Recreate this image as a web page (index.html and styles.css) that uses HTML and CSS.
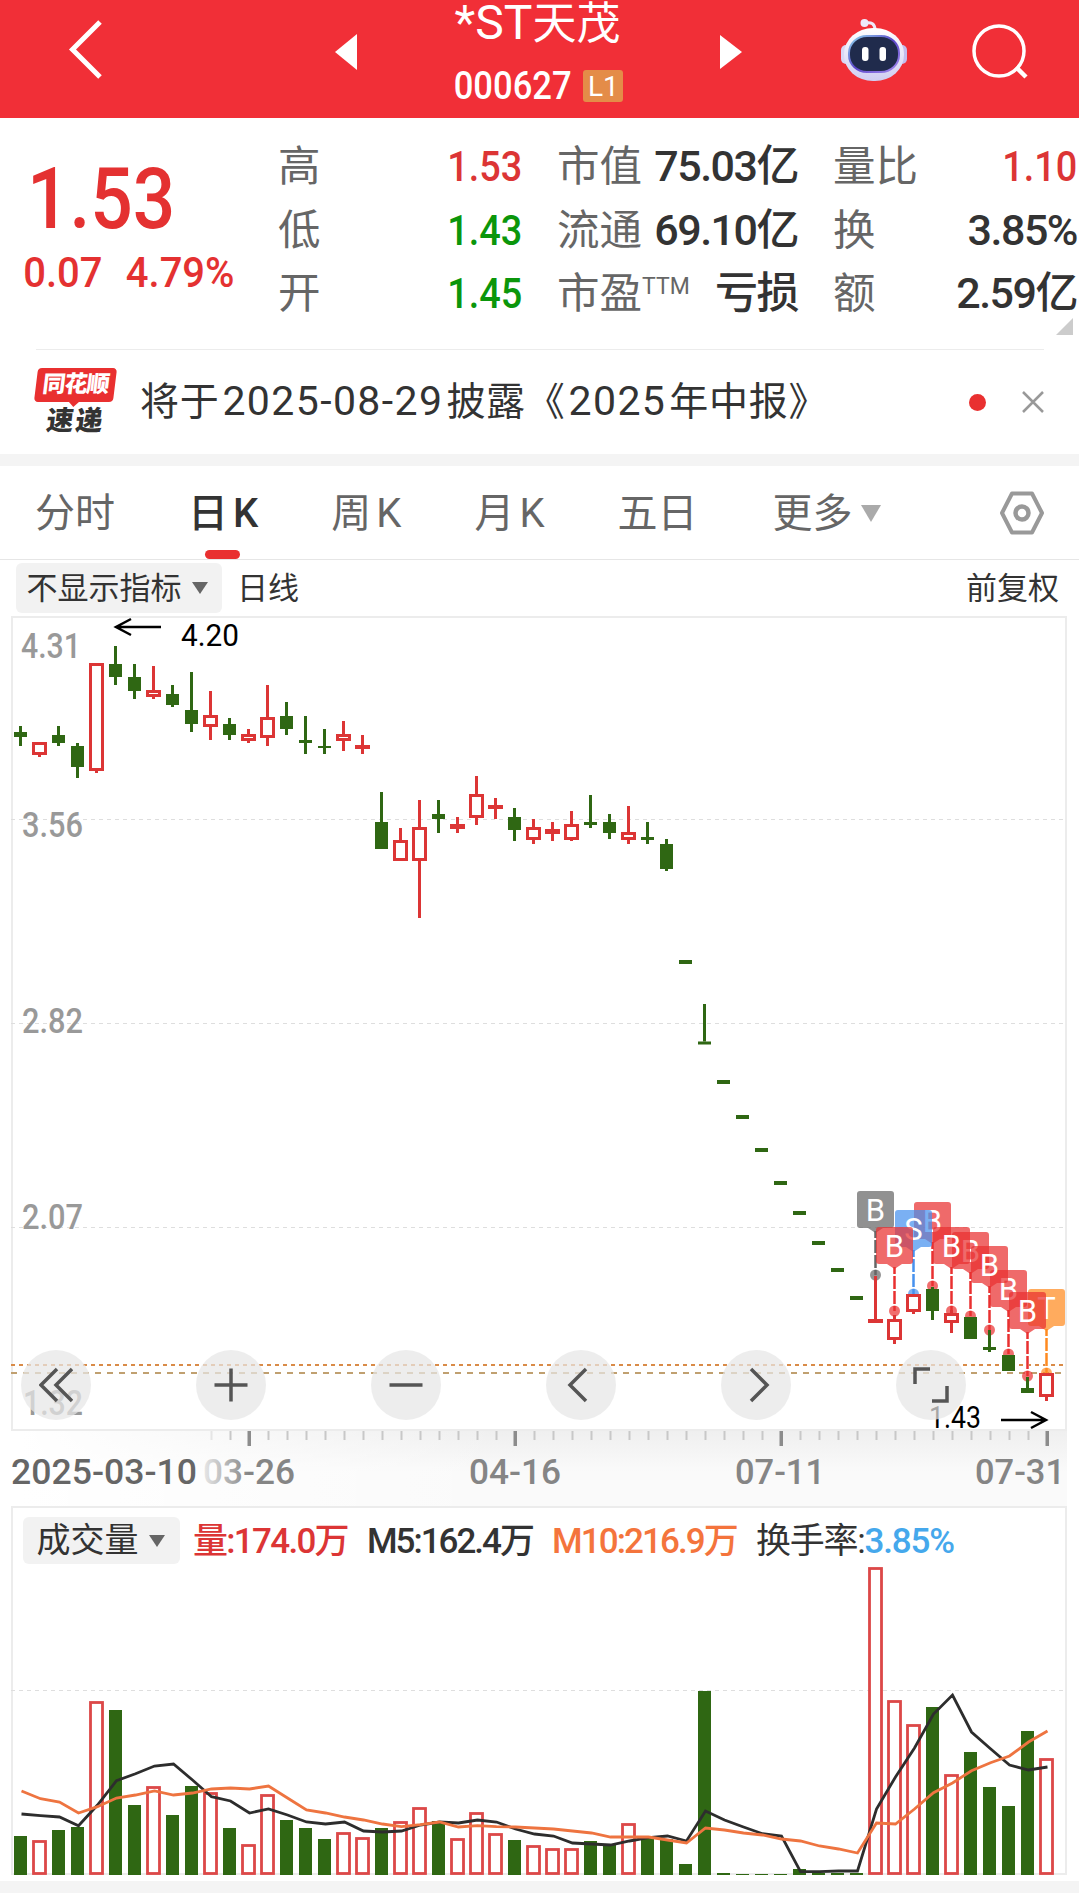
FILE: index.html
```html
<!DOCTYPE html>
<html lang="zh-CN">
<head>
  <meta charset="utf-8">
  <title>*ST天茂 000627</title>
  <meta name="viewport" content="width=device-width, initial-scale=1.0">
  <link rel="stylesheet" href="styles.css">
</head>
<body>
  <header class="topbar">
    <svg class="back" width="36" height="62" viewBox="0 0 36 62"><path d="M32 3 L4.500 30.500 L32 58" fill="none" stroke="#fff" stroke-width="5"/></svg>
    <svg class="prev" width="22" height="36" viewBox="0 0 22 36"><path d="M22 0 V36 L0 18 Z" fill="#fff"/></svg>
    <div class="title">
      <div class="name"><span class="latin">*ST</span>天茂</div>
      <div class="code"><span class="num">000627</span><span class="level">L1</span></div>
    </div>
    <svg class="next" width="22" height="34" viewBox="0 0 22 34"><path d="M0 0 V34 L22 17 Z" fill="#fff"/></svg>
    <svg class="robot" width="68" height="64" viewBox="0 0 68 64">
      <defs>
        <linearGradient id="head" x1="0" y1="0" x2="0" y2="1"><stop offset="0" stop-color="#fff"/><stop offset="1" stop-color="#cfcdf2"/></linearGradient>
        <linearGradient id="rim" x1="0" y1="0" x2="1" y2="1"><stop offset="0" stop-color="#8fd8ee"/><stop offset=".5" stop-color="#5b45c8"/><stop offset="1" stop-color="#a58cf0"/></linearGradient>
      </defs>
      <path d="M25 5 Q35 3 35 12" fill="none" stroke="#eee9fa" stroke-width="3"/>
      <circle cx="24.500" cy="5" r="4" fill="#eee9fa"/>
      <rect x="1" y="27" width="12" height="19" rx="5" fill="#d9d7f5"/>
      <rect x="55" y="27" width="12" height="19" rx="5" fill="#c3bdee"/>
      <rect x="4" y="10" width="60" height="53" rx="29" ry="26" fill="url(#head)"/>
      <rect x="9" y="18" width="50" height="36" rx="18" ry="17" fill="#202b4c" stroke="url(#rim)" stroke-width="2"/>
      <rect x="22" y="29" width="6.500" height="14" rx="3" fill="#fff"/>
      <rect x="39.500" y="29" width="6.500" height="14" rx="3" fill="#fff"/>
    </svg>
    <svg class="search" width="58" height="58" viewBox="0 0 58 58"><circle cx="27" cy="27" r="25" fill="none" stroke="#fff" stroke-width="3.500"/><path d="M44 43 L54 53" stroke="#fff" stroke-width="4.500"/></svg>
  </header>

  <section class="quote">
    <div class="price">
      <div class="last num">1.53</div>
      <div class="change num"><span>0.07</span><span>4.79%</span></div>
    </div>
    <dl class="stats">
      <div><dt>高</dt><dd class="num up">1.53</dd></div>
      <div><dt>市值</dt><dd class="num">75.03亿</dd></div>
      <div><dt>量比</dt><dd class="num up">1.10</dd></div>
      <div><dt>低</dt><dd class="num down">1.43</dd></div>
      <div><dt>流通</dt><dd class="num">69.10亿</dd></div>
      <div><dt>换</dt><dd class="num">3.85%</dd></div>
      <div><dt>开</dt><dd class="num down">1.45</dd></div>
      <div><dt>市盈<sup>TTM</sup></dt><dd class="num">亏损</dd></div>
      <div><dt>额</dt><dd class="num">2.59亿</dd></div>
    </dl>
    <i class="corner"></i>
  </section>

  <section class="news">
    <div class="brand">
      <span class="brand-top">同花顺</span>
      <span class="brand-bottom">速递</span>
    </div>
    <p>将于<span class="date">2025-08-29</span>披露《<span class="date">2025</span>年中报》</p>
    <i class="dot"></i>
    <svg width="22" height="22" viewBox="0 0 22 22"><path d="M1 1 L21 21 M21 1 L1 21" stroke="#999" stroke-width="2.500"/></svg>
  </section>

  <nav class="tabs">
    <a>分时</a>
    <a class="active">日<b>K</b></a>
    <a>周<b>K</b></a>
    <a>月<b>K</b></a>
    <a>五日</a>
    <a class="more">更多<i class="caret"></i></a>
    <svg width="46" height="44" viewBox="0 0 46 44"><path d="M13 2.500 H33 L43 22 L33 41.500 H13 L3 22 Z" fill="none" stroke="#999" stroke-width="4" stroke-linejoin="round"/><circle cx="23" cy="22" r="6.500" fill="none" stroke="#999" stroke-width="4.500"/></svg>
  </nav>

  <div class="indicator">
    <button class="chip">不显示指标<i class="caret"></i></button>
    <span>日线</span>
    <span class="adjust">前复权</span>
  </div>

  <main class="kline">
    <svg id="kline" width="1079" height="815" viewBox="0 616 1079 815"></svg>
    <div class="tools">
      <button><svg width="34" height="36" viewBox="0 0 34 36"><path d="M18 2 L2 18 L18 34 M33 2 L17 18 L33 34"/></svg></button>
      <button><svg width="34" height="34" viewBox="0 0 34 34"><path d="M0.500 17 H33.500 M17 0.500 V33.500"/></svg></button>
      <button><svg width="34" height="34" viewBox="0 0 34 34"><path d="M0.500 17 H33.500"/></svg></button>
      <button><svg width="34" height="36" viewBox="0 0 34 36"><path d="M22 2 L6 18 L22 34"/></svg></button>
      <button><svg width="34" height="36" viewBox="0 0 34 36"><path d="M12 2 L28 18 L12 34"/></svg></button>
      <button><svg width="38" height="38" viewBox="0 0 38 38"><path d="M3 18 V3 H18 M35 20 V35 H20"/></svg></button>
    </div>
  </main>

  <div class="axis">
    <svg id="axis" width="1079" height="75" viewBox="0 1431 1079 75"></svg>
  </div>

  <section class="volume">
    <div class="legend">
      <button class="chip">成交量<i class="caret"></i></button>
      <span class="v1 num">量:174.0万</span>
      <span class="v2 num">M5:162.4万</span>
      <span class="v3 num">M10:216.9万</span>
      <span class="v4 num">换手率:<em>3.85%</em></span>
    </div>
    <svg id="volume" width="1079" height="369" viewBox="0 1506 1079 369"></svg>
  </section>
  <div class="gap"></div>

  <script src="chart.js"></script>
</body>
</html>
```
FILE: styles.css
```css
body {
  margin: 0;
  width: 1079px;
  height: 1898px;
  overflow: hidden;
  background: #fff;
  color: #333;
  font-family: Roboto, "Noto Sans CJK SC", sans-serif;
}
svg {
  display: block;
  flex: none;
}
i, em {
  font-style: normal;
}
button {
  border: none;
  padding: 0;
  font: inherit;
  color: inherit;
}
.num {
  font-weight: 500;
}
.up {
  color: #dc3535;
}
.down {
  color: #0b960b;
}

/* header */
.topbar {
  display: flex;
  height: 118px;
  background: #f12f37;
  color: #fff;
}
.back {
  margin: 19px 0 0 68px;
}
.prev {
  margin: 34px 0 0 231px;
}
.title {
  width: 361px;
  padding-right: 2px;
  text-align: center;
}
.name {
  height: 63px;
  line-height: 46px;
  font-size: 44px;
}
.latin {
  font-size: 48px;
}
.code {
  display: flex;
  justify-content: center;
  align-items: center;
  height: 46px;
  font-size: 38px;
}
.code .num {
  transform: scaleX(.91);
  transform-origin: right;
}
.level {
  width: 40px;
  height: 32px;
  margin: 0 10px 0 12px;
  border-radius: 3px;
  background: #e48c48;
  font-size: 28px;
  line-height: 33px;
}
.next {
  margin-top: 35px;
}
.robot {
  margin: 18px 0 0 98px;
}
.search {
  margin: 24px 0 0 64px;
}

/* quote */
.quote {
  position: relative;
  display: flex;
  height: 231px;
}
.price {
  width: 278px;
  color: #e43131;
}
.last {
  padding: 31px 0 0 31px;
  height: 92px;
  line-height: 100px;
  font-size: 86px;
  transform: scaleX(.87);
  transform-origin: left;
}
.change {
  display: flex;
  gap: 25px;
  padding-left: 25px;
  font-size: 43px;
  line-height: 63px;
  transform: scaleX(.93);
  transform-origin: left;
}
.stats {
  display: grid;
  grid-template-columns: 244px 241px 244px;
  grid-auto-rows: 63.500px;
  column-gap: 35px;
  margin: 17px 0 0;
}
.stats div {
  display: flex;
  justify-content: space-between;
  align-items: center;
}
.stats dt {
  color: #666;
  font-size: 42.500px;
  line-height: 63px;
  white-space: nowrap;
}
.stats sup {
  font-size: 23px;
  line-height: 0;
  vertical-align: 14px;
}
.stats dd {
  margin: 0;
  font-size: 43px;
  line-height: 63px;
  letter-spacing: -1.500px;
}
.stats .up, .stats .down {
  letter-spacing: 0;
  transform: scaleX(.88);
  transform-origin: right;
}
.corner {
  position: absolute;
  right: 6px;
  top: 200px;
  border-left: 17px solid transparent;
  border-bottom: 17px solid #ccc;
}

/* news */
.news {
  display: flex;
  align-items: center;
  height: 104px;
  margin: 0 35px 0 36px;
  border-top: 1px solid #ececec;
}
.brand {
  width: 79px;
  margin-right: 25px;
  text-align: center;
}
.brand span {
  display: block;
  font-weight: 900;
  transform: skewX(-7deg);
}
.brand-top {
  position: relative;
  height: 34px;
  border-radius: 4px;
  background: #e93030;
  color: #fff;
  font-size: 23px;
  line-height: 34px;
  letter-spacing: -1px;
}
.brand-top::after {
  content: "";
  position: absolute;
  left: 34px;
  top: 33px;
  border: 6px solid transparent;
  border-top-color: #e93030;
  border-bottom: 0;
}
.brand-bottom {
  margin-top: 3px;
  font-size: 27px;
  line-height: 32px;
  letter-spacing: 2px;
}
.news p {
  margin: -8px 0 0;
  flex: 1;
  font-size: 39px;
  letter-spacing: .700px;
  white-space: nowrap;
}
.date {
  margin: 0 3px;
  font-size: 41px;
  letter-spacing: 1.400px;
}
.dot {
  width: 17px;
  height: 17px;
  border-radius: 50%;
  background: #e93030;
  margin-right: 36px;
}

/* tabs */
.tabs {
  display: flex;
  height: 93px;
  padding: 0 34px 0 35px;
  border-top: 12px solid #f4f4f4;
  border-bottom: 1px solid #e6e6e6;
  line-height: 95px;
  font-size: 40px;
  color: #666;
}
.tabs a {
  position: relative;
  margin-right: 73px;
  white-space: nowrap;
}
.tabs b {
  font-weight: inherit;
  margin-left: 5px;
}
.tabs .active {
  color: #333;
  font-weight: 500;
}
.active::after {
  content: "";
  position: absolute;
  left: 17px;
  bottom: 0;
  width: 35px;
  height: 9px;
  border-radius: 5px;
  background: #e93030;
}
.tabs .more {
  margin: 0 0 0 2px;
}
.tabs svg {
  margin: 25px 0 0 auto;
}
.caret {
  display: inline-block;
  margin-left: 8px;
  border: 10px solid transparent;
  border-top: 17px solid #aaa;
  border-bottom: 0;
  vertical-align: 5px;
}
.chip {
  border-radius: 6px;
  background: #f2f2f2;
  white-space: nowrap;
}
.chip .caret {
  margin-left: 10px;
  border-width: 12px 8px 0;
  border-top-color: #666;
}
.indicator {
  display: flex;
  height: 50px;
  padding: 3px 20px 3px 16px;
  font-size: 31px;
  line-height: 51px;
}
.indicator .chip {
  width: 206px;
  height: 50px;
  padding: 0 4px 2px 0;
  margin-right: 15px;
}
.adjust {
  margin-left: auto;
}

/* charts */
.kline {
  position: relative;
}
.tools {
  position: absolute;
  left: 21px;
  top: 734px;
  display: flex;
  gap: 105px;
}
.tools button {
  display: flex;
  justify-content: center;
  align-items: center;
  width: 70px;
  height: 70px;
  border-radius: 50%;
  background: rgba(230, 230, 230, .72);
}
.tools path {
  fill: none;
  stroke: #555;
  stroke-width: 3.500;
}
.axis {
  width: 1067px;
  overflow: hidden;
  background: linear-gradient(90deg, #fff 20px, rgba(255, 255, 255, 0) 500px), linear-gradient(#efefef, #fafafa 55%);
}
.volume {
  position: relative;
}
.legend {
  position: absolute;
  left: 23px;
  top: 11px;
  display: flex;
  font-size: 35px;
  line-height: 49px;
  white-space: nowrap;
}
.legend .chip {
  width: 157px;
  height: 47px;
  padding: 0 2px 0 0;
  margin-right: 13px;
  font-size: 34px;
  line-height: 47px;
}
.legend span {
  margin-right: 19px;
}
.v1 {
  color: #dc3535;
  letter-spacing: -1.700px;
}
.v2 {
  letter-spacing: -2px;
}
.v3 {
  color: #f4743c;
  letter-spacing: -1.900px;
}
.v4 {
  letter-spacing: -1.200px;
  font-weight: 400;
}
.v4 em {
  color: #45a8ec;
  font-weight: 500;
}
.gap {
  height: 12px;
  margin-top: 6px;
  background: #f4f4f4;
}

.frame {
  fill: none;
  stroke: #ececec;
  stroke-width: 2;
}
.grid {
  stroke: #dedede;
  stroke-dasharray: 4 4;
}
.scale {
  fill: #999;
  font: 500 35px Roboto, sans-serif;
}
.day {
  fill: #858585;
  font: 500 35px Roboto, sans-serif;
}
.mark {
  fill: #000;
  font: 31px Roboto, sans-serif;
}
.flag {
  fill: #fff;
  font: 31px Roboto, sans-serif;
  text-anchor: middle;
}
```
FILE: chart.js
```js
// [direction, high, body top, body bottom, low, volume top, M5, M10]
var days = [
  ["g", 726, 732, 737, 746, 1836, 1814, 1791],
  ["r", 742, 742, 755, 757, 1840, 1815.7, 1798.7],
  ["g", 726, 735, 743, 746, 1830, 1817, 1802],
  ["g", 743, 746, 767, 778, 1827, 1825.7, 1813],
  ["r", 663, 663, 771, 773, 1701, 1805, 1806.7],
  ["g", 646, 664, 677, 685, 1710, 1780.7, 1798],
  ["g", 664, 677, 691, 699, 1805, 1773.7, 1795],
  ["r", 666, 690, 697, 699, 1786, 1766, 1791],
  ["g", 685, 694, 705, 707, 1815, 1764, 1795],
  ["g", 672, 710, 724, 732, 1786, 1780, 1793],
  ["r", 691, 715, 727, 740, 1792, 1796.7, 1789],
  ["g", 718, 724, 735, 740, 1828, 1801, 1788],
  ["r", 729, 734, 741, 743, 1844, 1813, 1789],
  ["r", 685, 717, 738, 746, 1794, 1809, 1786],
  ["g", 702, 716, 729, 735, 1820, 1815, 1798],
  ["g", 716, 740, 743, 754, 1828, 1822, 1810],
  ["g", 729, 746, 748, 754, 1839, 1824, 1813],
  ["r", 721, 734, 741, 751, 1832, 1822, 1817],
  ["r", 735, 745, 749, 754, 1837, 1831, 1820],
  ["g", 792, 822, 849, 849, 1828, 1832, 1824],
  ["r", 828, 840, 861, 861, 1821, 1831, 1826.7],
  ["r", 800, 827, 861, 918, 1807, 1825, 1824.7],
  ["g", 800, 814, 819, 833, 1821, 1822, 1822],
  ["r", 817, 824, 829, 833, 1838, 1823, 1827],
  ["r", 776, 794, 818, 825, 1812, 1820, 1825.7],
  ["r", 798, 805, 809, 819, 1833, 1822, 1826.7],
  ["g", 808, 817, 830, 841, 1840, 1829, 1827],
  ["r", 819, 827, 840, 844, 1845, 1834, 1828],
  ["r", 822, 829, 834, 841, 1848, 1836, 1829],
  ["r", 811, 824, 840, 841, 1848, 1843, 1831],
  ["g", 795, 822, 825, 828, 1841, 1844, 1833],
  ["g", 814, 822, 833, 839, 1844, 1845, 1837],
  ["r", 806, 832, 840, 844, 1823, 1841, 1837],
  ["g", 822, 837, 840, 844, 1838, 1837.7, 1837],
  ["g", 839, 844, 869, 871, 1839, 1836, 1840],
  ["g", 960, 960, 964, 964, 1864, 1841, 1843],
  ["g", 1004, 1041.5, 1044.5, 1044, 1691, 1811, 1828],
  ["g", 1080, 1080, 1084, 1084, 1873, 1820, 1830],
  ["g", 1115, 1115, 1119, 1119, 1874, 1827, 1833],
  ["g", 1148, 1148, 1152, 1152, 1874, 1833.7, 1835],
  ["g", 1181, 1181, 1185, 1185, 1874, 1836, 1839],
  ["g", 1211, 1211, 1215, 1215, 1869, 1871.7, 1841],
  ["g", 1241, 1241, 1245, 1245, 1873, 1871.7, 1846],
  ["g", 1268, 1268, 1272, 1272, 1873, 1871, 1849],
  ["g", 1296, 1296, 1300, 1300, 1873, 1871, 1853],
  ["r", 1276, 1319, 1323, 1323, 1567, 1809, 1823],
  ["r", 1315, 1319, 1340, 1344, 1700, 1777, 1824],
  ["r", 1294, 1294, 1312, 1314, 1724, 1748, 1809],
  ["g", 1287, 1289, 1311, 1320, 1707, 1714, 1792.7],
  ["r", 1310, 1313, 1323, 1333, 1774, 1695, 1783],
  ["g", 1317, 1317, 1339, 1339, 1752, 1732, 1770.7],
  ["g", 1330, 1347, 1350, 1352, 1787, 1748.7, 1762.7],
  ["g", 1355, 1355, 1371, 1371, 1806, 1765, 1756],
  ["g", 1377, 1388, 1393, 1393, 1731, 1770, 1742],
  ["r", 1373, 1373, 1397, 1401, 1758, 1767, 1731]
];

// [day, letter, colour, top], back to front
var flags = [
  [54, "T", "#ff8a20", 1289], [52, "B", "#e93030", 1270], [50, "B", "#e93030", 1232],
  [48, "B", "#e93030", 1202], [47, "S", "#4791ee", 1210], [45, "B", "#666", 1191],
  [53, "B", "#e93030", 1292], [51, "B", "#e93030", 1246], [49, "B", "#e93030", 1227],
  [46, "B", "#e93030", 1227]
];

var RED = "#dc3535";
var GREEN = "#2f6713";

function x(i) {
  return 20.5 + 19 * i;
}
function rect(left, top, width, height, fill, extra) {
  return '<rect x="' + left + '" y="' + top + '" width="' + width + '" height="' + height + '" fill="' + fill + '" ' + (extra || "") + '/>';
}
function line(x1, y1, x2, y2, extra) {
  return '<line x1="' + x1 + '" y1="' + y1 + '" x2="' + x2 + '" y2="' + y2 + '" ' + extra + '/>';
}
function text(left, baseline, width, cls, value, extra) {
  return '<text x="' + left + '" y="' + baseline + '" textLength="' + width + '" lengthAdjust="spacingAndGlyphs" class="' + cls + '" ' + (extra || "") + '>' + value + '</text>';
}

function drawKline() {
  var out = rect(12, 617, 1054, 813, "none", 'class="frame"');
  [819.5, 1023.5, 1227.5].forEach(function(y) {
    out += line(11, y, 1065, y, 'class="grid"');
  });
  out += text(21, 658, 60, "scale", "4.31");
  out += text(22, 837, 61, "scale", "3.56");
  out += text(22, 1033, 61, "scale", "2.82");
  out += text(22, 1229, 61, "scale", "2.07");
  out += text(23, 1415, 60, "scale", "1.32");
  out += line(11, 1365, 1065, 1365, 'stroke="#d98b48" stroke-width="2" stroke-dasharray="4 4"');
  out += line(11, 1373, 1065, 1373, 'stroke="#c0a070" stroke-width="2" stroke-dasharray="6 6"');

  flags.forEach(function(f) {
    out += line(x(f[0]), f[3] + 40, x(f[0]), f[3] + 84, 'stroke="#fff" stroke-width="3"');
    out += line(x(f[0]), f[3] + 40, x(f[0]), f[3] + 84, 'stroke="' + f[2] + '" stroke-width="2.5" stroke-dasharray="13 2" stroke-dashoffset="6"');
    out += '<circle cx="' + x(f[0]) + '" cy="' + (f[3] + 84) + '" r="5.5" fill="' + f[2] + '" opacity=".7"/>';
  });

  days.forEach(function(d, i) {
    var color = d[0] == "r" ? RED : GREEN;
    if (d[2] > d[1]) out += rect(x(i) - 1.5, d[1], 3, d[2] - d[1], color);
    if (d[4] > d[3]) out += rect(x(i) - 1.5, d[3], 3, d[4] - d[3], color);
    if (d[0] == "g") {
      out += rect(x(i) - 6.5, d[2], 13, d[3] - d[2], GREEN);
    } else if (d[3] - d[2] < 6) {
      out += rect(x(i) - 7.5, d[2], 15, d[3] - d[2], RED);
    } else {
      out += rect(x(i) - 6, d[2] + 1.5, 12, d[3] - d[2] - 3, "#fff", 'stroke="' + RED + '" stroke-width="3"');
    }
  });

  flags.forEach(function(f) {
    var left = x(f[0]) - 18.5, t = f[3];
    out += '<g opacity=".72"><path fill="' + f[2] + '" d="M' + (left + 3) + ' ' + t + 'h31q3 0 3 3v31q0 3 -3 3h-8l-7.5 5l-7.5 -5h-8q-3 0 -3 -3v-31q0 -3 3 -3z"/></g>';
    out += '<text class="flag" x="' + x(f[0]) + '" y="' + (t + 30) + '">' + f[1] + '</text>';
  });

  out += '<path d="M161 627 H116 M131 619 L116 627 L131 635 M1001 1420 H1046 M1031 1412 L1046 1420 L1031 1428" fill="none" stroke="#000" stroke-width="2.5"/>';
  out += text(181, 646, 58, "mark", "4.20");
  out += text(929, 1428, 52, "mark", "1.43");
  document.getElementById("kline").innerHTML = out;
}

function drawAxis() {
  var out = "";
  for (var i = 10; i < 55; i++) {
    if (i % 14 == 12) {
      out += rect(x(i) - 1, 1431, 3.5, 15, "#8c8c8c");
    } else {
      out += rect(x(i), 1431, 2, 9, "#c8c8c8", i == 10 ? 'opacity=".4"' : "");
    }
  }
  out += '<defs><linearGradient id="fade"><stop offset="0" stop-color="#e8e8e8"/><stop offset=".5" stop-color="#858585"/></linearGradient></defs>';
  out += text(11, 1484, 186, "day", "2025-03-10", 'style="fill:#666"');
  out += text(203, 1484, 92, "day", "03-26", 'style="fill:url(#fade)"');
  out += text(469, 1484, 92, "day", "04-16");
  out += text(735, 1484, 90, "day", "07-11");
  out += text(975, 1484, 90, "day", "07-31");
  document.getElementById("axis").innerHTML = out;
}

function drawVolume() {
  var out = rect(12, 1507, 1054, 367, "none", 'class="frame"');
  out += line(11, 1690.5, 1065, 1690.5, 'class="grid"');
  days.forEach(function(d, i) {
    if (d[0] == "g") {
      out += rect(x(i) - 6.5, d[5], 13, 1875 - d[5], GREEN);
    } else {
      out += rect(x(i) - 6, d[5] + 1.5, 12, 1873.5 - d[5] - 1.5, "#fff", 'stroke="#dc4848" stroke-width="2.8"');
    }
  });
  [[6, "#2d2d2d"], [7, "#ee7440"]].forEach(function(s) {
    var points = days.map(function(d, i) {
      return (x(i) + 1) + "," + d[s[0]];
    }).join(" ");
    out += '<polyline points="' + points + '" fill="none" stroke="' + s[1] + '" stroke-width="2.8"/>';
  });
  document.getElementById("volume").innerHTML = out;
}

drawKline();
drawAxis();
drawVolume();
```
